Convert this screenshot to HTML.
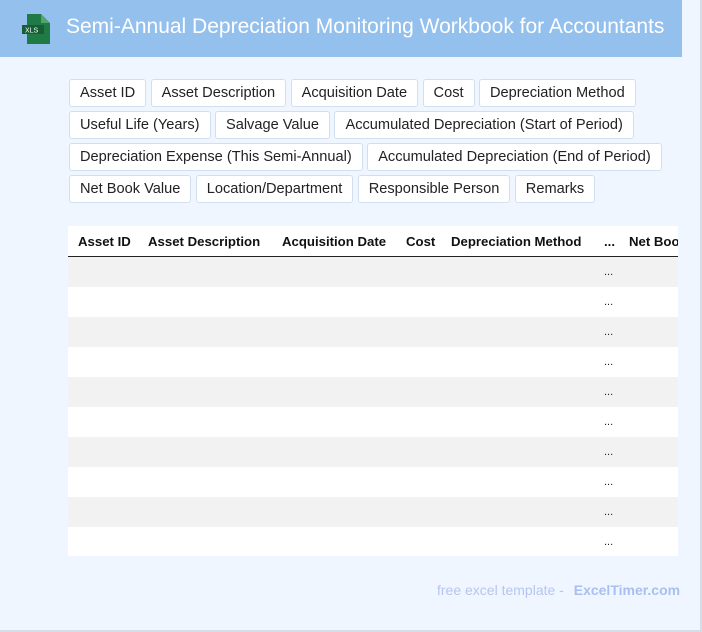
<!DOCTYPE html>
<html><head><style>
body{margin:0;width:702px;height:632px;overflow:hidden;background:#f0f6ff;font-family:"Liberation Sans",Arial,sans-serif;position:relative}
.frame{position:absolute;left:0;top:0;width:700px;height:630px;border-right:2px solid #d6dde6;border-bottom:2px solid #d6dde6}
.hdr{position:absolute;left:0;top:0;width:682px;height:57px;background:#93c0ec}
.hdr h1{position:absolute;left:66px;top:15px;margin:0;font-size:21px;font-weight:normal;color:#fff;white-space:nowrap}
.tags{position:absolute;left:69px;top:79px;width:610px}
.tag{display:inline-block;height:26px;line-height:26px;padding:0 10px;border:1px solid #d3dfee;border-radius:3px;background:#fff;font-size:14.6px;color:#222;margin:0 0 4px 0;box-sizing:content-box;white-space:nowrap}
.tw{position:absolute;left:68px;top:226px;width:610px;height:330px;overflow:hidden;background:#fff}
table{border-collapse:collapse;white-space:nowrap;font-size:13.2px;table-layout:fixed;width:680px}
th{height:30px;text-align:left;padding:0 0 0 10px;border-bottom:1.5px solid #222;font-weight:bold;color:#111;overflow:hidden}
td{height:30px;padding:0 0 0 10px;font-size:11px;color:#222}
tr:nth-child(even) td{background:#f2f2f2}
.ft{position:absolute;top:582px;left:437px;font-size:14px;color:#b5c6ee;white-space:nowrap}
.ft b{color:#a9bff0;margin-left:6px}
</style></head><body>
<div class="frame"></div>
<div class="hdr">
<svg style="position:absolute;left:21px;top:14px" width="30" height="30" viewBox="0 0 30 30">
<path d="M6 0h14l9 9v21H6z" fill="#1f7a45"/><path d="M20 0v9h9z" fill="#52a36e"/>
<rect x="1" y="11" width="22" height="9" fill="#175e35"/>
<text x="4" y="18.5" font-size="7" fill="#fff" font-family="Liberation Sans">XLS</text></svg>
<h1>Semi-Annual Depreciation Monitoring Workbook for Accountants</h1></div>
<div class="tags">
<span class="tag">Asset ID</span> <span class="tag">Asset Description</span> <span class="tag">Acquisition Date</span> <span class="tag">Cost</span> <span class="tag">Depreciation Method</span>
<span class="tag">Useful Life (Years)</span> <span class="tag">Salvage Value</span> <span class="tag">Accumulated Depreciation (Start of Period)</span>
<span class="tag">Depreciation Expense (This Semi-Annual)</span> <span class="tag">Accumulated Depreciation (End of Period)</span>
<span class="tag">Net Book Value</span> <span class="tag">Location/Department</span> <span class="tag">Responsible Person</span> <span class="tag">Remarks</span>
</div>
<div class="tw"><table>
<colgroup><col style="width:70px"><col style="width:134px"><col style="width:124px"><col style="width:45px"><col style="width:153px"><col style="width:25px"><col style="width:129px"></colgroup>
<tr><th>Asset ID</th><th>Asset Description</th><th>Acquisition Date</th><th>Cost</th><th>Depreciation Method</th><th>...</th><th>Net Book Value</th></tr>
<tr><td></td><td></td><td></td><td></td><td></td><td>...</td><td></td></tr>
<tr><td></td><td></td><td></td><td></td><td></td><td>...</td><td></td></tr>
<tr><td></td><td></td><td></td><td></td><td></td><td>...</td><td></td></tr>
<tr><td></td><td></td><td></td><td></td><td></td><td>...</td><td></td></tr>
<tr><td></td><td></td><td></td><td></td><td></td><td>...</td><td></td></tr>
<tr><td></td><td></td><td></td><td></td><td></td><td>...</td><td></td></tr>
<tr><td></td><td></td><td></td><td></td><td></td><td>...</td><td></td></tr>
<tr><td></td><td></td><td></td><td></td><td></td><td>...</td><td></td></tr>
<tr><td></td><td></td><td></td><td></td><td></td><td>...</td><td></td></tr>
<tr><td></td><td></td><td></td><td></td><td></td><td>...</td><td></td></tr>
</table></div>
<div class="ft">free excel template - <b>ExcelTimer.com</b></div>
</body></html>
